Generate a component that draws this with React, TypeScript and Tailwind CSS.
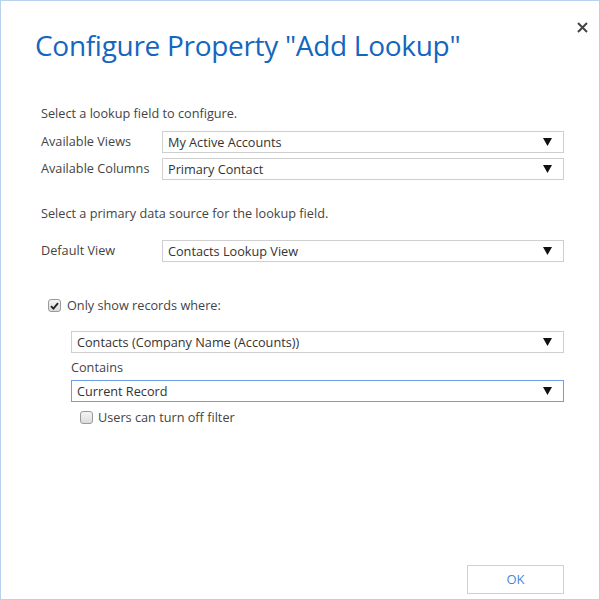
import React from "react";

function Arrow() {
  return (
    <svg width="9" height="8" viewBox="0 0 9 8" aria-hidden="true">
      <polygon points="0,0 9,0 4.5,8" fill="#111" />
    </svg>
  );
}

function Select({ value, focused = false }: { value: string; focused?: boolean }) {
  return (
    <div
      className={
        "w-full h-[22px] flex items-center justify-between pl-[5px] pr-[11px] bg-white text-[#333] " +
        (focused ? "border border-[#6c9fe6]" : "border border-[#cfcfcf]")
      }
    >
      <span className="leading-none">{value}</span>
      <Arrow />
    </div>
  );
}

function Checkbox({ checked }: { checked: boolean }) {
  return (
    <span className="w-[13px] h-[13px] rounded-[3px] border border-[#9a9a9a] bg-gradient-to-b from-[#f4f4f4] to-[#dcdcdc] flex items-center justify-center shrink-0">
      {checked && (
        <svg width="9" height="8" viewBox="0 0 9 8" aria-hidden="true">
          <path d="M1 4.2 L3.4 6.6 L8 1.2" stroke="#222" strokeWidth="1.8" fill="none" />
        </svg>
      )}
    </span>
  );
}

function Row({ label, value }: { label: string; value: string }) {
  return (
    <div className="flex items-center">
      <span className="w-[121px] shrink-0">{label}</span>
      <Select value={value} />
    </div>
  );
}

export default function App() {
  return (
    <div className="w-[600px] h-[600px] border border-[#b7d2ee] bg-white relative flex flex-col font-['Open_Sans',sans-serif] text-[12.7px] text-[#444]">
      <button
        aria-label="Close"
        className="absolute top-[19px] right-[10px] w-[14px] h-[14px] flex items-center justify-center"
      >
        <svg width="11" height="11" viewBox="0 0 11 11" aria-hidden="true">
          <path d="M1 1 L10 10 M10 1 L1 10" stroke="#444" strokeWidth="2" />
        </svg>
      </button>

      <h1 className="pl-[34px] pt-[24px] text-[28px] leading-[40px] text-[#1566be] tracking-[-0.3px]">
        Configure Property "Add Lookup"
      </h1>

      <div className="pl-[40px] pr-[35px] pt-[39px] flex flex-col">
        <p className="leading-[18px]">Select a lookup field to configure.</p>

        <div className="mt-[9px] flex flex-col gap-[5px]">
          <Row label="Available Views" value="My Active Accounts" />
          <Row label="Available Columns" value="Primary Contact" />
        </div>

        <p className="mt-[24px] leading-[18px]">Select a primary data source for the lookup field.</p>

        <div className="mt-[18px]">
          <Row label="Default View" value="Contacts Lookup View" />
        </div>

        <label className="mt-[34px] flex items-center gap-[6px] pl-[7px]">
          <Checkbox checked />
          <span>Only show records where:</span>
        </label>

        <div className="pl-[30px] mt-[16px] flex flex-col">
          <Select value="Contacts (Company Name (Accounts))" />
          <span className="mt-[4px] leading-[20px]">Contains</span>
          <div className="mt-[3px]">
            <Select value="Current Record" focused />
          </div>
          <label className="mt-[6px] flex items-center gap-[5px] pl-[9px]">
            <Checkbox checked={false} />
            <span>Users can turn off filter</span>
          </label>
        </div>
      </div>

      <div className="mt-auto flex justify-end pr-[35px] pb-[5px]">
        <button className="w-[97px] h-[29px] border border-[#d0d0d0] bg-white text-[#3f8ad8] text-[13px]">
          OK
        </button>
      </div>
    </div>
  );
}
